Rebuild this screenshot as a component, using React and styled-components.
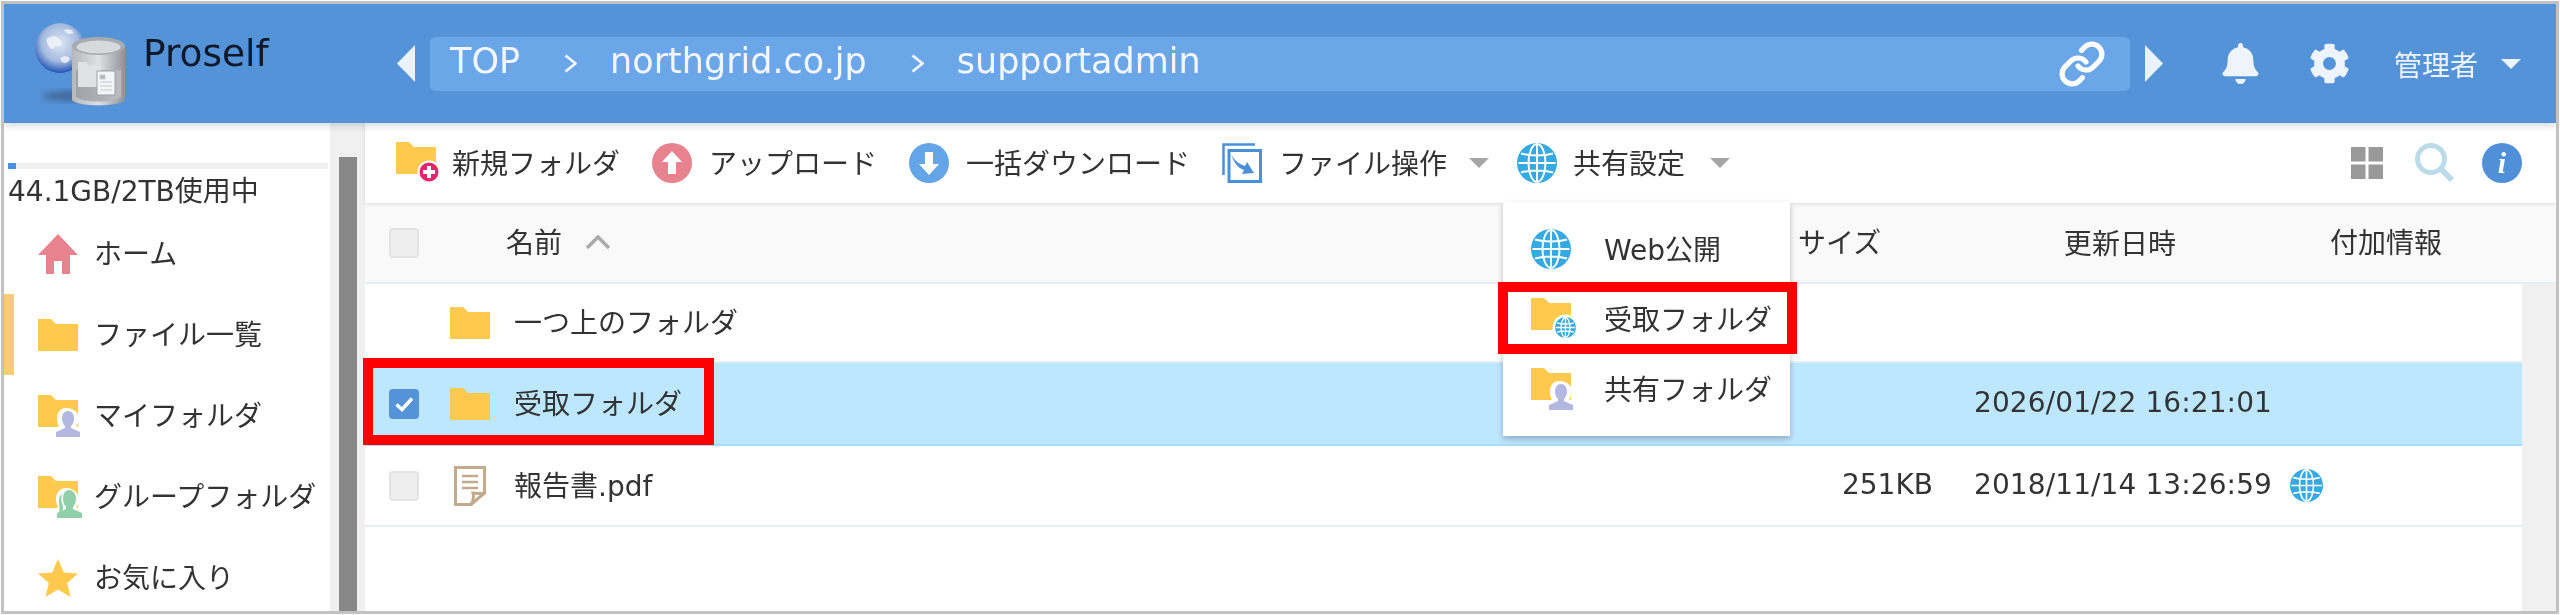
import React from "react";
import styled, { createGlobalStyle } from "styled-components";
import { Link } from "lucide-react";
import { FaBell, FaCog } from "react-icons/fa";

const Global = createGlobalStyle`
  html, body { margin: 0; padding: 0; background: #fff; }
  body { font-family: "DejaVu Sans", "Noto Sans CJK JP", sans-serif; color: #333; overflow: hidden; }
  * { box-sizing: border-box; }
`;

const Frame = styled.div`
  margin: 1px;
  width: 2558px;
  height: 613px;
  border: 3px solid #c2c2c2;
  display: flex;
  flex-direction: column;
  overflow: hidden;
  background: #fff;
  filter: blur(0.45px);
`;
const Header = styled.header`
  height: 119px;
  flex: none;
  background: #5593d9;
  display: flex;
  align-items: center;
  position: relative;
  z-index: 3;
  box-shadow: 0 2px 8px rgba(0, 0, 0, 0.18);
`;
const Brand = styled.div`
  width: 393px;
  flex: none;
  display: flex;
  align-items: flex-start;
  align-self: stretch;
  padding: 14px 0 0 26px;
`;
const BrandName = styled.span`
  font-size: 37.5px;
  line-height: 1;
  color: #0e1a2b;
  margin: 17px 0 0 9px;
`;
const Arrow = styled.svg`
  width: 18px;
  height: 37px;
  flex: none;
  fill: #eaf2fb;
`;
const Crumbs = styled.nav`
  flex: none;
  width: 1700px;
  height: 54px;
  margin: 0 15px;
  border-radius: 5px;
  background: #6ba6e8;
  color: #f2f7fd;
  font-size: 35px;
  display: flex;
  align-items: center;
  padding: 0 24px 6px 20px;
  gap: 33px;
`;
const CrumbLink = styled.div`
  margin: 6px 0 0 auto;
  display: flex;
  color: #fff;
`;
const HeadIcons = styled.div`
  display: flex;
  align-items: center;
  margin-left: 57px;
  gap: 48px;
  color: #eef4fc;
  font-size: 41px;
  flex: none;
`;
const UserName = styled.div`
  display: flex;
  align-items: center;
  gap: 23px;
  font-size: 28px;
  color: #eef4fc;
  white-space: nowrap;
  margin-left: -4px;
`;
const Body = styled.div`
  flex: 1;
  display: flex;
  min-height: 0;
`;
const Sidebar = styled.aside`
  width: 326px;
  flex: none;
  padding-top: 40px;
  overflow: hidden;
`;
const Meter = styled.div`
  height: 6px;
  margin: 0 2px 0 4px;
  background: #f0f0f0;
`;
const MeterFill = styled.div`
  height: 100%;
  background: #4a90e2;
`;
const Usage = styled.div`
  height: 44px;
  padding: 0 0 5px 4px;
  display: flex;
  align-items: center;
  font-size: 28px;
  white-space: nowrap;
`;
const NavItem = styled.div`
  height: 81px;
  flex: none;
  display: flex;
  align-items: center;
  border-left: 10px solid ${(p) => (p.$active ? "#f5cd75" : "transparent")};
  padding-left: 24px;
  font-size: 28px;
  white-space: nowrap;
`;
const NavIcon = styled.span`
  width: 56px;
  flex: none;
  display: flex;
`;
const Label = styled.span`
  padding-bottom: 3px;
`;
const ScrollTrack = styled.div`
  width: ${(p) => p.$w}px;
  flex: none;
  background: #f0f0f0;
  padding: ${(p) => p.$pt || 0}px 8px 0 9px;
`;
const Thumb = styled.div`
  height: 100%;
  background: #888;
`;
const Main = styled.main`
  flex: 1;
  min-width: 0;
  display: flex;
  flex-direction: column;
`;
const Toolbar = styled.div`
  height: 80px;
  flex: none;
  display: flex;
  align-items: stretch;
  padding: 0 34px 0 31px;
  gap: 32px;
  position: relative;
  z-index: 2;
  background: #fff;
  box-shadow: 0 1px 4px rgba(0, 0, 0, 0.12);
`;
const ToolItem = styled.div`
  position: relative;
  display: flex;
  align-items: center;
  gap: ${(p) => p.$gap || 17}px;
  font-size: 28px;
  white-space: nowrap;
  color: #333;
`;
const ToolRight = styled.div`
  margin-left: auto;
  display: flex;
  align-items: center;
  gap: 27px;
`;
const GridSlot = styled.span`
  display: flex;
  margin-right: 5px;
`;
const InfoBadge = styled.span`
  width: 40px;
  height: 40px;
  border-radius: 50%;
  background: #4f90d9;
  color: #fff;
  font: italic bold 30px "Liberation Serif", serif;
  display: flex;
  align-items: center;
  justify-content: center;
`;
const Menu = styled.div`
  position: absolute;
  top: calc(100% - 1px);
  left: -14px;
  width: 287px;
  padding: 12px 0;
  background: #fff;
  box-shadow: 0 3px 6px rgba(0, 0, 0, 0.25);
`;
const MenuItem = styled.div`
  position: relative;
  height: 70px;
  display: flex;
  align-items: center;
  padding-left: 28px;
  font-size: 28px;
`;
const MenuIcon = styled.span`
  width: 73px;
  flex: none;
  display: flex;
`;
const Highlight = styled.div`
  position: absolute;
  border: 10px solid #ff0000;
  z-index: 1;
  pointer-events: none;
  top: ${(p) => p.$t}px;
  bottom: ${(p) => p.$b}px;
  left: ${(p) => p.$l}px;
  ${(p) => (p.$w ? `width: ${p.$w}px;` : `right: ${p.$r}px;`)}
`;
const Content = styled.div`
  flex: 1;
  display: flex;
  min-height: 0;
`;
const Table = styled.div`
  flex: 1;
  min-width: 0;
`;
const Row = styled.div`
  position: relative;
  flex: none;
  display: grid;
  grid-template-columns: 85px 1348px 166px 318px 1fr;
  align-items: center;
  height: ${(p) => p.$h}px;
  font-size: 28px;
  background: ${(p) => (p.$head ? "#f9f9f9" : p.$selected ? "#bde6ff" : "#fff")};
  border-bottom: 2px solid ${(p) => (p.$selected ? "#a9dcfb" : "#e4eef5")};
`;
const CheckCell = styled.div`
  padding-left: 24px;
  display: flex;
`;
const Check = styled.span`
  width: 30px;
  height: 30px;
  border-radius: 4px;
  display: flex;
  background: ${(p) => (p.$on ? "#5593d9" : "#eeeeee")};
  border: ${(p) => (p.$on ? "none" : "2px solid #e3e3e3")};
`;
const NameCell = styled.div`
  display: flex;
  align-items: center;
  gap: ${(p) => p.$gap || 24}px;
  padding-left: ${(p) => p.$pl || 0}px;
  white-space: nowrap;
`;
const DocSlot = styled.span`
  width: 40px;
  display: flex;
  justify-content: center;
`;
const SizeCell = styled.div`
  padding: 0 31px 3px 0;
  text-align: ${(p) => p.$align};
  white-space: nowrap;
`;
const DateCell = styled.div`
  text-align: center;
  white-space: nowrap;
  padding: 0 ${(p) => p.$pr || 0}px 2px 0;
  letter-spacing: 0.1px;
`;
const ExtraCell = styled.div`
  display: flex;
  padding-left: ${(p) => p.$pl}px;
  white-space: nowrap;
`;
const CaretIcon = styled.svg`
  width: 20px;
  height: 10px;
  flex: none;
  margin: 0 ${(p) => p.$mr || 0}px 0 ${(p) => p.$ml || 0}px;
  fill: ${(p) => p.$color || "#a6a6a6"};
`;

const FOLDER = "M0 0h13l5 5h22v27H0z";
const Folder = () => (
  <svg width="40" height="32" viewBox="0 0 40 32"><path d={FOLDER} fill="#ffc94d" /></svg>
);
const Globe = ({ s = 40 }) => (
  <svg width={s} height={s} viewBox="0 0 40 40">
    <circle cx="20" cy="20" r="20" fill="#35a9e1" />
    <g fill="none" stroke="#fff" strokeWidth="2">
      <ellipse cx="20" cy="20" rx="8.5" ry="19" />
      <path d="M20 1v38M1.5 20h37M4 10.5c9 2.6 23 2.6 32 0M4 29.5c9-2.6 23-2.6 32 0" />
    </g>
  </svg>
);
const UserFolder = ({ color }) => (
  <svg width="46" height="42" viewBox="0 0 46 42" style={{ overflow: "visible" }}>
    <path d={FOLDER} fill="#ffc94d" />
    <path d="M28 13c-7 0-9 6-9 11 0 3 1 6 2 8l-7 4v6h32v-7l-8-4c2-2 3-5 3-8 0-5-5-10-13-10z" fill="#fff" />
    <path d="M30 16c-4 0-6 3.500-6 7.500 0 3 1 5.500 3 7.500v2l-9 4v5h24v-5l-9-4v-2c2-2 3-4.500 3-7.500 0-4-2-7.500-6-7.500z" fill={color} />
  </svg>
);
const GroupFolder = () => (
  <svg width="46" height="42" viewBox="0 0 46 42" style={{ overflow: "visible" }}>
    <path d={FOLDER} fill="#ffc94d" />
    <path d="M28 12c-7 0-10 6-10 11 0 3 1 6 2 8l-6 5v6h32v-7l-8-4c2-2 3-5 3-8 0-5-5-11-13-11z" fill="#fff" />
    <path d="M21 24c0-3 1.500-5 3-6-1 4-1 8 1 12v4l-4 3c1-4 0-9 0-13z" fill="#8fcfaa" />
    <path d="M31 14c-4 0-6 4-6 8 0 4 1 7 3 9v2l-9 4v5h25v-5l-9-4v-2c2-2 3-5 3-9 0-4-3-8-7-8z" fill="#8fcfaa" />
  </svg>
);
const WebFolder = () => (
  <svg width="46" height="42" viewBox="0 0 46 42" style={{ overflow: "visible" }}>
    <path d={FOLDER} fill="#ffc94d" />
    <circle cx="34.500" cy="29.500" r="13" fill="#fff" />
    <g transform="translate(24 19) scale(0.525)"><circle cx="20" cy="20" r="20" fill="#35a9e1" />
      <g fill="none" stroke="#fff" strokeWidth="2.500"><ellipse cx="20" cy="20" rx="8.500" ry="19" /><path d="M20 1v38M1.500 20h37M4 11c9 2.600 23 2.600 32 0M4 29c9-2.600 23-2.600 32 0" /></g></g>
  </svg>
);
const Home = () => (
  <svg width="40" height="40" viewBox="0 0 40 40"><path d="M20 0l20 21h-8v19H24V27h-8v13H8V21H0z" fill="#e8828f" /></svg>
);
const Star = () => (
  <svg width="40" height="38" viewBox="0 0 40 38"><path d="M20 0l5.800 13.500L40 14.500 29.200 24l3.300 14L20 30.500 7.500 38l3.300-14L0 14.500l14.200-1z" fill="#ffc94d" /></svg>
);
const NewFolder = () => (
  <svg width="44" height="42" viewBox="0 0 44 42">
    <path d={FOLDER} fill="#ffc94d" />
    <circle cx="33" cy="30" r="11.500" fill="#fff" />
    <circle cx="33" cy="30" r="9.500" fill="#e8246f" />
    <path d="M33 24v12M27 30h12" stroke="#fff" strokeWidth="4" />
  </svg>
);
const CircleArrow = ({ color, up }) => (
  <svg width="40" height="40" viewBox="0 0 40 40">
    <circle cx="20" cy="20" r="20" fill={color} />
    <path d={up ? "M20 8l10 11h-6v12h-8V19h-6z" : "M20 32L10 21h6V9h8v12h6z"} fill="#fff" />
  </svg>
);
const FileOps = () => (
  <svg width="40" height="40" viewBox="0 0 40 40" fill="none" stroke="#4a90d9" strokeWidth="2.500">
    <path d="M1.500 32V1.500H33" />
    <path d="M7 7.500h31.500v31H7z" strokeWidth="3" />
    <path d="M9 11c4 8 9 10 14 12l2-4 7 11-12 1 2-4c-6-2-10-7-13-16z" fill="#4a90d9" stroke="none" />
  </svg>
);
const Caret = (props) => (
  <CaretIcon viewBox="0 0 20 10" {...props}><path d="M0 0h20L10 10z" /></CaretIcon>
);
const GridIcon = () => (
  <svg width="32" height="32" viewBox="0 0 32 32" fill="#999">
    <rect width="14.500" height="14.500" /><rect x="17.500" width="14.500" height="14.500" />
    <rect y="17.500" width="14.500" height="14.500" /><rect x="17.500" y="17.500" width="14.500" height="14.500" />
  </svg>
);
const Magnifier = () => (
  <svg width="40" height="40" viewBox="0 0 40 40" fill="none" stroke="#bcdbe8">
    <circle cx="16" cy="16" r="13.500" strokeWidth="5" />
    <path d="M25.500 25.500L37 37" strokeWidth="6" />
  </svg>
);
const CheckMark = () => (
  <svg width="30" height="30" viewBox="0 0 30 30"><path d="M7.500 15.500l5.500 5 10-11" fill="none" stroke="#fff" strokeWidth="3.500" /></svg>
);
const SortUp = () => (
  <svg width="26" height="15" viewBox="0 0 26 15"><path d="M2 13L13 2l11 11" fill="none" stroke="#aaa" strokeWidth="3.500" /></svg>
);
const Chevron = () => (
  <svg width="13" height="19" viewBox="0 0 13 19" style={{ flex: "none", margin: "6px 0 0 11px" }}><path d="M1.500 1.500l10 8-10 8" fill="none" stroke="#f2f7fd" strokeWidth="2.800" /></svg>
);
const Doc = () => (
  <svg width="32" height="40" viewBox="0 0 32 40" fill="none" stroke="#c2ab8c">
    <path d="M1.500 1.500h29V27L17 38.500H1.500z" strokeWidth="3" />
    <path d="M31 27c-3 1-10 0-12 0 1 3 0 8-2 12" strokeWidth="3" />
    <path d="M8 10h16M8 16h16M8 22h16" strokeWidth="2.500" />
  </svg>
);
const Logo = () => (
  <svg width="104" height="92" viewBox="0 0 104 92" style={{ flex: "none" }}>
    <defs>
      <radialGradient id="gl" cx="0.5" cy="0.4" r="0.62">
        <stop offset="0" stopColor="#dfe6f3" /><stop offset="0.6" stopColor="#a3badf" /><stop offset="0.9" stopColor="#3a66bd" /><stop offset="1" stopColor="#1d49a8" />
      </radialGradient>
      <linearGradient id="cy" x1="0" x2="1" y1="0" y2="0">
        <stop offset="0" stopColor="#b4b8bc" /><stop offset="0.5" stopColor="#dde1e4" /><stop offset="1" stopColor="#8e9397" />
      </linearGradient>
      <linearGradient id="cy2" x1="0" x2="1" y1="0" y2="0">
        <stop offset="0" stopColor="#9fa3a8" /><stop offset="1" stopColor="#b9bdc1" />
      </linearGradient>
      <filter id="bl"><feGaussianBlur stdDeviation="3" /></filter>
    </defs>
    <ellipse cx="48" cy="78" rx="36" ry="6" fill="#33506f" opacity="0.55" filter="url(#bl)" />
    <circle cx="30" cy="30" r="25" fill="url(#gl)" />
    <path d="M16 22c6-6 12-4 15 1 3 4-2 6-6 5-2 6-6 3-9-6zM30 40c5-3 9-2 10 1-3 5-8 6-10-1zM34 12c4-2 9 0 10 3-4 2-8 1-10-3z" fill="#f4f6fa" opacity="0.8" />
    <path d="M42 28v54c4 7 49 7 53 0V28z" fill="url(#cy)" />
    <path d="M46 52h45v27c-8 6-37 6-45 0z" fill="url(#cy2)" />
    <ellipse cx="68.500" cy="28" rx="26.500" ry="9" fill="#a6abaf" />
    <ellipse cx="68.500" cy="29" rx="22" ry="6.500" fill="#d6dadd" />
    <path d="M48 44h8l3 3h12v22H48z" fill="#dfe1e3" />
    <path d="M67 53h18v24H67z" fill="#f4f5f6" stroke="#9da1a5" />
    <path d="M70 57h5v4h-5zM70 64h12M70 68h12M70 72h12" fill="#b5b8bb" stroke="#c6c9cb" />
  </svg>
);

export default function App() {
  return (
    <>
      <Global />
      <Frame>
        <Header>
          <Brand>
            <Logo />
            <BrandName>Proself</BrandName>
          </Brand>
          <Arrow viewBox="0 0 18 37"><path d="M18 0v37L0 18.500z" /></Arrow>
          <Crumbs>
            <span>TOP</span>
            <Chevron />
            <span>northgrid.co.jp</span>
            <Chevron />
            <span>supportadmin</span>
            <CrumbLink><Link size={48} strokeWidth={2.6} /></CrumbLink>
          </Crumbs>
          <Arrow viewBox="0 0 18 37"><path d="M0 0v37l18-18.500z" /></Arrow>
          <HeadIcons>
            <FaBell />
            <FaCog />
            <UserName>管理者<Caret $color="#eef4fc" /></UserName>
          </HeadIcons>
        </Header>
        <Body>
          <Sidebar>
            <Meter><MeterFill style={{ width: 8 }} /></Meter>
            <Usage>44.1GB/2TB使用中</Usage>
            <NavItem><NavIcon><Home /></NavIcon><Label>ホーム</Label></NavItem>
            <NavItem $active><NavIcon><Folder /></NavIcon><Label>ファイル一覧</Label></NavItem>
            <NavItem><NavIcon><UserFolder color="#b3b8e0" /></NavIcon><Label>マイフォルダ</Label></NavItem>
            <NavItem><NavIcon><GroupFolder /></NavIcon><Label>グループフォルダ</Label></NavItem>
            <NavItem><NavIcon><Star /></NavIcon><Label>お気に入り</Label></NavItem>
          </Sidebar>
          <ScrollTrack $w={35} $pt={34}><Thumb /></ScrollTrack>
          <Main>
            <Toolbar>
              <ToolItem $gap={12}><NewFolder /><Label>新規フォルダ</Label></ToolItem>
              <ToolItem><CircleArrow color="#e8828f" up /><Label>アップロード</Label></ToolItem>
              <ToolItem><CircleArrow color="#63a5e6" /><Label>一括ダウンロード</Label></ToolItem>
              <ToolItem><FileOps /><Label>ファイル操作</Label><Caret $ml={5} $mr={-4} /></ToolItem>
              <ToolItem $gap={16}>
                <Globe /><Label>共有設定</Label><Caret $ml={9} />
                <Menu>
                  <MenuItem><MenuIcon><Globe /></MenuIcon><Label>Web公開</Label></MenuItem>
                  <MenuItem>
                    <MenuIcon><WebFolder /></MenuIcon><Label>受取フォルダ</Label>
                    <Highlight $t={-2} $b={0} $l={-5} $r={-7} />
                  </MenuItem>
                  <MenuItem><MenuIcon><UserFolder color="#b3b8e0" /></MenuIcon><Label>共有フォルダ</Label></MenuItem>
                </Menu>
              </ToolItem>
              <ToolRight>
                <GridSlot><GridIcon /></GridSlot>
                <Magnifier />
                <InfoBadge>i</InfoBadge>
              </ToolRight>
            </Toolbar>
            <Row $head $h={81}>
              <CheckCell><Check /></CheckCell>
              <NameCell $pl={56} $gap={23}><Label>名前</Label><SortUp /></NameCell>
              <SizeCell $align="left">サイズ</SizeCell>
              <DateCell $pr={6}>更新日時</DateCell>
              <ExtraCell $pl={48}><Label>付加情報</Label></ExtraCell>
            </Row>
            <Content>
              <Table>
                <Row $h={79}>
                  <span />
                  <NameCell><Folder /><Label>一つ上のフォルダ</Label></NameCell>
                </Row>
                <Row $selected $h={83}>
                  <CheckCell><Check $on><CheckMark /></Check></CheckCell>
                  <NameCell><Folder /><Label>受取フォルダ</Label></NameCell>
                  <span />
                  <DateCell>2026/01/22 16:21:01</DateCell>
                  <Highlight $t={-5} $b={-1} $l={-2} $w={351} />
                </Row>
                <Row $h={81}>
                  <CheckCell><Check /></CheckCell>
                  <NameCell><DocSlot><Doc /></DocSlot><Label>報告書.pdf</Label></NameCell>
                  <SizeCell $align="right">251KB</SizeCell>
                  <DateCell>2018/11/14 13:26:59</DateCell>
                  <ExtraCell $pl={8}><Globe s={33} /></ExtraCell>
                </Row>
              </Table>
              <ScrollTrack $w={34} />
            </Content>
          </Main>
        </Body>
      </Frame>
    </>
  );
}
